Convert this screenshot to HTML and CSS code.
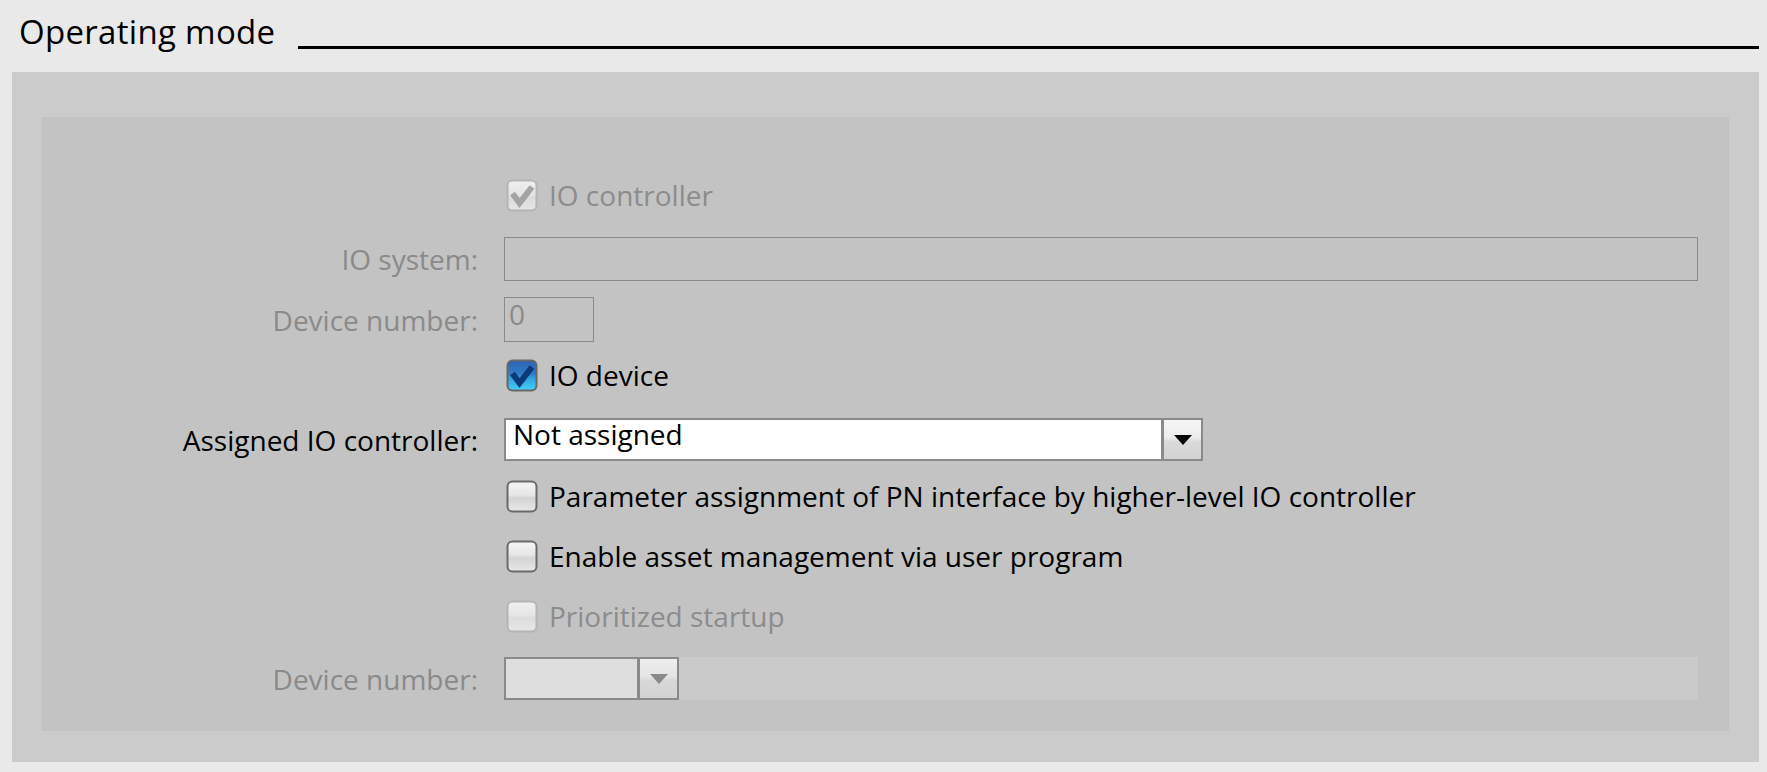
FILE: index.html
```html
<!DOCTYPE html>
<html lang="en">
<head>
<meta charset="utf-8">
<title>Operating mode</title>
<link rel="stylesheet" href="styles.css">
</head>
<body>
  <header class="section-header">
    <h1 class="section-title">Operating mode</h1>
    <div class="section-rule"></div>
  </header>

  <section class="outer-panel">
    <div class="inner-panel">

      <div class="row row-check row-first">
        <span class="label"></span>
        <div class="control check disabled">
          <svg class="cb" width="32" height="33" viewBox="0 0 32 33">
            <defs>
              <linearGradient id="gDis1" x1="0" y1="0" x2="0" y2="1">
                <stop offset="0" stop-color="#f0f0f0"/>
                <stop offset="0.5" stop-color="#e4e4e4"/>
                <stop offset="0.55" stop-color="#dadada"/>
                <stop offset="1" stop-color="#e6e6e6"/>
              </linearGradient>
            </defs>
            <rect x="1.5" y="1.5" width="29" height="30" rx="5" fill="url(#gDis1)" stroke="#b4b4b4" stroke-width="2"/>
            <path d="M6.5 14.5 L13.5 24 L26 8" fill="none" stroke="#a4a4a4" stroke-width="6"/>
          </svg>
          <span class="check-text">IO controller</span>
        </div>
      </div>

      <div class="row row-field mt-22">
        <span class="label disabled">IO system:</span>
        <div class="control">
          <div class="field field-full"></div>
        </div>
      </div>

      <div class="row row-field mt-16">
        <span class="label disabled">Device number:</span>
        <div class="control">
          <div class="field field-short">0</div>
        </div>
      </div>

      <div class="row row-check mt-14">
        <span class="label"></span>
        <div class="control check">
          <svg class="cb" width="32" height="33" viewBox="0 0 32 33">
            <defs>
              <linearGradient id="gBlue" x1="0" y1="0" x2="0" y2="1">
                <stop offset="0" stop-color="#2e62b4"/>
                <stop offset="0.45" stop-color="#2f7cc8"/>
                <stop offset="0.55" stop-color="#2f9ada"/>
                <stop offset="1" stop-color="#45d2fa"/>
              </linearGradient>
            </defs>
            <rect x="1.5" y="1.5" width="29" height="30" rx="5" fill="url(#gBlue)" stroke="#686868" stroke-width="2"/>
            <path d="M6.5 14.5 L13.5 24 L26 8" fill="none" stroke="#0c3a78" stroke-width="6"/>
          </svg>
          <span class="check-text">IO device</span>
        </div>
      </div>

      <div class="row row-select mt-23">
        <span class="label">Assigned IO controller:</span>
        <div class="control">
          <div class="select select-wide">
            <div class="select-value">Not assigned</div>
            <div class="select-btn">
              <svg width="18" height="10" viewBox="0 0 18 10"><path d="M0 0 H18 L9 10 Z" fill="#000"/></svg>
            </div>
          </div>
        </div>
      </div>

      <div class="row row-check mt-15">
        <span class="label"></span>
        <div class="control check">
          <svg class="cb" width="32" height="33" viewBox="0 0 32 33">
            <defs>
              <linearGradient id="gOff1" x1="0" y1="0" x2="0" y2="1">
                <stop offset="0" stop-color="#f6f6f6"/>
                <stop offset="0.45" stop-color="#e6e6e6"/>
                <stop offset="0.55" stop-color="#d4d4d4"/>
                <stop offset="1" stop-color="#e8e8e8"/>
              </linearGradient>
            </defs>
            <rect x="1.5" y="1.5" width="29" height="30" rx="5" fill="url(#gOff1)" stroke="#6a6a6a" stroke-width="2"/>
          </svg>
          <span class="check-text">Parameter assignment of PN interface by higher-level IO controller</span>
        </div>
      </div>

      <div class="row row-check mt-20">
        <span class="label"></span>
        <div class="control check">
          <svg class="cb" width="32" height="33" viewBox="0 0 32 33">
            <defs>
              <linearGradient id="gOff2" x1="0" y1="0" x2="0" y2="1">
                <stop offset="0" stop-color="#f6f6f6"/>
                <stop offset="0.45" stop-color="#e6e6e6"/>
                <stop offset="0.55" stop-color="#d4d4d4"/>
                <stop offset="1" stop-color="#e8e8e8"/>
              </linearGradient>
            </defs>
            <rect x="1.5" y="1.5" width="29" height="30" rx="5" fill="url(#gOff2)" stroke="#6a6a6a" stroke-width="2"/>
          </svg>
          <span class="check-text">Enable asset management via user program</span>
        </div>
      </div>

      <div class="row row-check mt-20">
        <span class="label"></span>
        <div class="control check disabled">
          <svg class="cb" width="32" height="33" viewBox="0 0 32 33">
            <defs>
              <linearGradient id="gDis2" x1="0" y1="0" x2="0" y2="1">
                <stop offset="0" stop-color="#f0f0f0"/>
                <stop offset="0.45" stop-color="#e6e6e6"/>
                <stop offset="0.55" stop-color="#dcdcdc"/>
                <stop offset="1" stop-color="#e8e8e8"/>
              </linearGradient>
            </defs>
            <rect x="1.5" y="1.5" width="29" height="30" rx="5" fill="url(#gDis2)" stroke="#b4b4b4" stroke-width="2"/>
          </svg>
          <span class="check-text">Prioritized startup</span>
        </div>
      </div>

      <div class="row row-select mt-21">
        <span class="label disabled">Device number:</span>
        <div class="control control-band">
          <div class="select select-narrow disabled">
            <div class="select-value"></div>
            <div class="select-btn">
              <svg width="18" height="10" viewBox="0 0 18 10"><path d="M0 0 H18 L9 10 Z" fill="#8a8a8a"/></svg>
            </div>
          </div>
          <div class="band"></div>
        </div>
      </div>

    </div>
  </section>
</body>
</html>
```

FILE: styles.css
```css
html, body {
  margin: 0;
  padding: 0;
}

body {
  background: #e9e9e9;
  font-family: "Open Sans", "Noto Sans", "Liberation Sans", sans-serif;
  color: #000;
  width: 1767px;
  height: 772px;
  overflow: hidden;
}

/* ---------- Header ---------- */
.section-header {
  display: flex;
  align-items: flex-start;
  height: 72px;
  box-sizing: border-box;
  padding: 12px 8px 0 19px;
}

.section-title {
  margin: 0;
  font-size: 33px;
  letter-spacing: 0.3px;
  font-weight: 400;
  line-height: 40px;
  white-space: nowrap;
}

.section-rule {
  flex: 1;
  height: 3px;
  margin-top: 34px;
  margin-left: 23px;
  background: #000;
}

/* ---------- Panels ---------- */
.outer-panel {
  margin: 0 8px 0 12px;
  height: 690px;
  box-sizing: border-box;
  padding: 45px 30px 31px 30px;
  background: #cbcbcb;
}

.inner-panel {
  height: 614px;
  box-sizing: border-box;
  padding: 58px 31px 0 0;
  background: #c3c3c3;
  display: flex;
  flex-direction: column;
}

/* ---------- Rows ---------- */
.row {
  display: grid;
  grid-template-columns: 436px 1fr;
  column-gap: 26px;
  align-items: center;
  font-size: 28px;
}

.row-check { height: 40px; }
.row-field { height: 44px; }
.row-select { height: 43px; }

.mt-14 { margin-top: 14px; }
.mt-15 { margin-top: 15px; }
.mt-16 { margin-top: 16px; }
.mt-20 { margin-top: 20px; }
.mt-21 { margin-top: 21px; }
.mt-22 { margin-top: 22px; }
.mt-23 { margin-top: 23px; }

.label {
  text-align: right;
  white-space: nowrap;
  line-height: 34px;
  color: #000;
}

.label.disabled { color: #8a8a8a; }

.control {
  display: flex;
  align-items: center;
  min-width: 0;
}

/* ---------- Checkboxes ---------- */
.check { gap: 11px; margin-left: 2px; }

.cb {
  display: block;
  flex: 0 0 auto;
}

.check-text {
  line-height: 34px;
  white-space: nowrap;
  color: #000;
}

.check.disabled .check-text { color: #8c8c8c; }

/* ---------- Text fields ---------- */
.field {
  height: 44px;
  box-sizing: border-box;
  border: 1px solid #8a8a8a;
  padding: 2px 4px 0 4px;
  line-height: 28px;
  color: #8a8a8a;
}

.field-full { flex: 1; }
.field-short { width: 90px; height: 45px; }

/* ---------- Dropdowns ---------- */
.select {
  display: flex;
  height: 43px;
  box-sizing: border-box;
  border: 2px solid #8a8a8a;
  background: #fff;
}

.select-wide { width: 699px; }
.select-narrow { width: 175px; }

.select-value {
  flex: 1;
  padding: 0 0 0 7px;
  line-height: 28px;
  white-space: nowrap;
  color: #000;
}

.select-btn {
  flex: 0 0 37px;
  border-left: 3px solid #8a8a8a;
  display: flex;
  align-items: center;
  justify-content: center;
  background: linear-gradient(to bottom, #f6f6f6 0%, #ececec 45%, #dadada 55%, #d2d2d2 100%);
}

.select.disabled { background: #dedede; }

.select.disabled .select-btn {
  background: linear-gradient(to bottom, #eeeeee 0%, #e4e4e4 45%, #d8d8d8 55%, #d2d2d2 100%);
}

.control-band { align-self: stretch; align-items: stretch; }

.band {
  flex: 1;
  background: #cacaca;
}
```
